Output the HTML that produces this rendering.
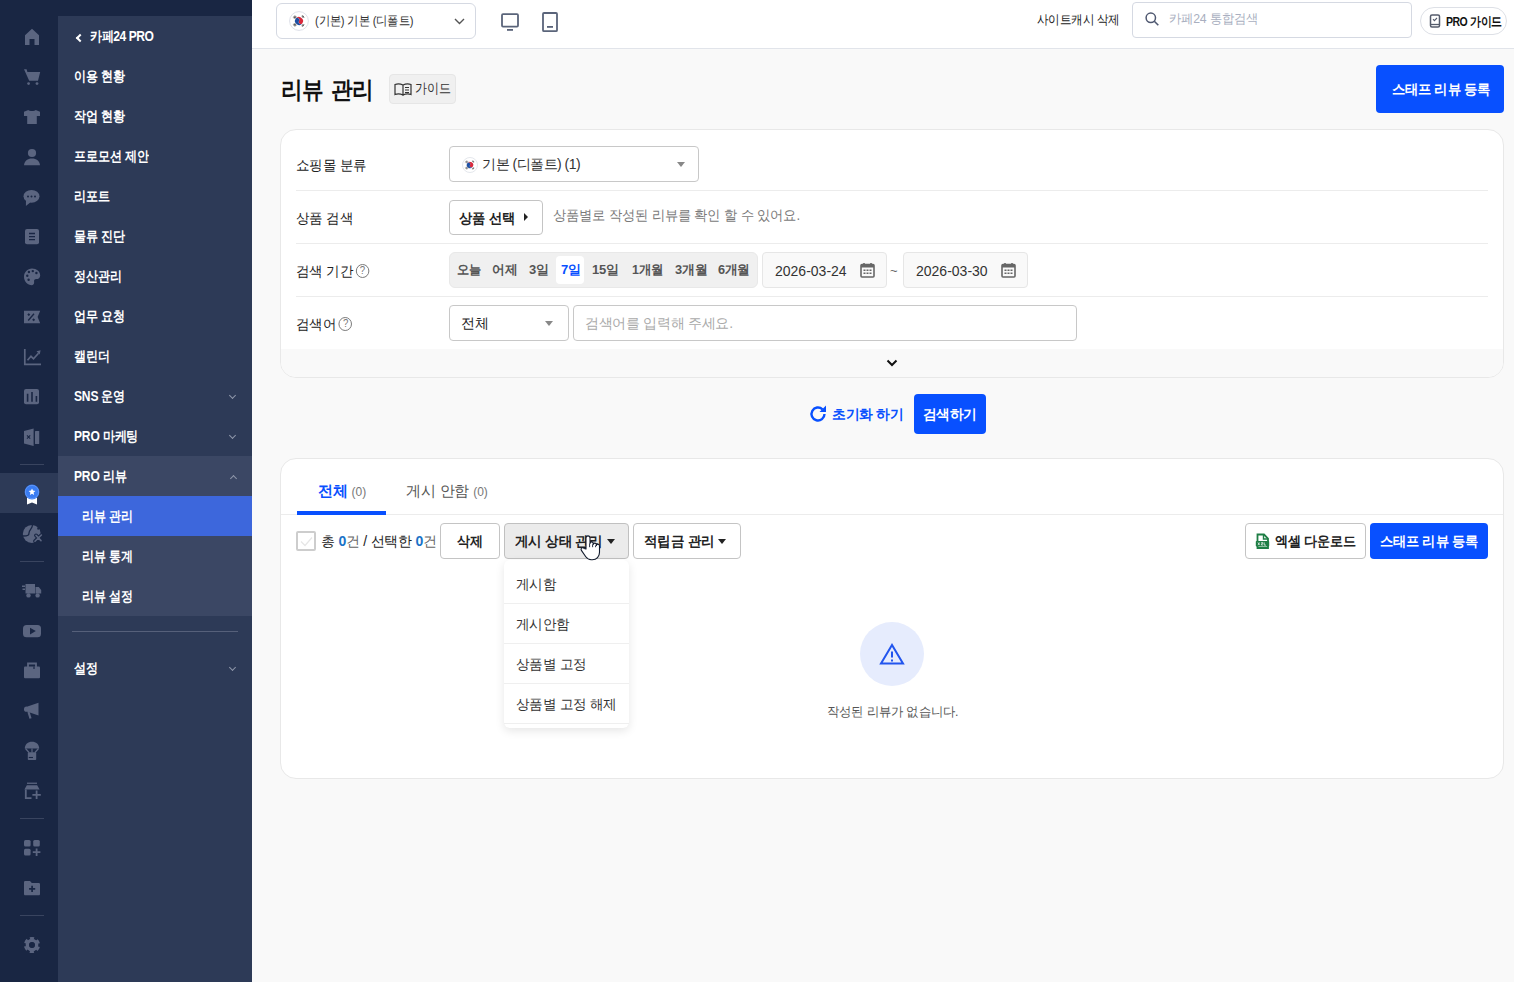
<!DOCTYPE html>
<html lang="ko">
<head>
<meta charset="utf-8">
<style>
*{box-sizing:border-box;margin:0;padding:0}
html,body{width:1514px;height:982px;overflow:hidden}
body{font-family:"Liberation Sans",sans-serif;background:#f9f9f9;position:relative;color:#222}
.abs{position:absolute}
#rail{left:0;top:0;width:58px;height:982px;background:#192643}
#topdark{left:58px;top:0;width:194px;height:16px;background:#192643}
#menu{left:58px;top:16px;width:194px;height:966px;background:#2d3a57}
.mi{position:absolute;left:16px;font-size:14px;font-weight:700;color:#fff;line-height:20px;letter-spacing:-0.2px;word-spacing:0px;white-space:nowrap;transform:scaleX(0.86);transform-origin:0 50%}
.chev{position:absolute;left:172px;width:5px;height:5px;border-right:1.8px solid #8f97aa;border-bottom:1.8px solid #8f97aa;transform:rotate(45deg)}
.rsep{position:absolute;left:20px;width:24px;height:1px;background:#3a4560}
.ri{position:absolute;left:16px;width:26px;height:26px}
#header{left:252px;top:0;width:1262px;height:49px;background:#fff;border-bottom:1px solid #e1e4ea}
.t{position:absolute;white-space:nowrap;line-height:20px}
.card{position:absolute;left:280px;width:1224px;background:#fff;border:1px solid #e8e8e8;border-radius:16px;overflow:hidden}
.lbl{position:absolute;left:15px;font-size:14px;color:#222;line-height:20px;letter-spacing:-0.2px;transform:scaleX(0.965);transform-origin:0 50%;white-space:nowrap}
.hsep{position:absolute;left:15px;width:1192px;height:1px;background:#ececec}
.box{position:absolute;border:1px solid #c8c8c8;border-radius:4px;background:#fff}
.caret{position:absolute;width:0;height:0;border-left:4.5px solid transparent;border-right:4.5px solid transparent;border-top:5px solid #888}
.btn{position:absolute;border:1px solid #c4c4c4;border-radius:4px;background:#fff;font-size:14px;font-weight:700;color:#222;line-height:20px;white-space:nowrap}
.blue{background:#0850ff;color:#fff;border-radius:4px;position:absolute;font-weight:700;white-space:nowrap}
.q{position:relative;top:-1px;display:inline-block;width:14px;height:14px;border:1.2px solid #777;border-radius:50%;font-size:10px;line-height:12px;text-align:center;color:#777;vertical-align:middle;margin-left:3px;font-weight:400;letter-spacing:0}
</style>
</head>
<body>
<!-- ============ SIDEBAR ============ -->
<div id="rail" class="abs"></div>
<div id="topdark" class="abs"></div>
<!-- rail icons -->
<div class="abs" style="left:0;top:473px;width:58px;height:40px;background:#2d3a57"></div>
<svg class="abs" style="left:0;top:0" width="58" height="982" viewBox="0 0 58 982">
<g fill="#5b6580">
 <!-- home -->
 <path d="M32 28.8L39 35.3V45H34.5V39H29.5V45H25V35.3Z"/>
 <!-- cart -->
 <path d="M24 69.2H26.6L27.4 72H40.2L38 80.7H29.2Z"/>
 <circle cx="28.6" cy="83.6" r="1.4"/><circle cx="37" cy="83.6" r="1.4"/>
 <!-- shirt -->
 <path d="M28.3 110L24 111.8V116H27.2V124H36.8V116H40V111.8L35.7 110C34.6 111.4 29.4 111.4 28.3 110Z"/>
 <!-- person -->
 <circle cx="32" cy="153" r="4.1"/>
 <path d="M24 165.2C24.3 160.8 27.6 158.4 32 158.4S39.7 160.8 40 165.2Z"/>
 <!-- chat -->
 <ellipse cx="31.5" cy="196.3" rx="8" ry="6.4"/>
 <path d="M26 200L25.9 206L30.5 202.2Z"/>
 <!-- doc -->
 <rect x="25" y="229" width="14" height="15.2" rx="2"/>
 <!-- palette -->
 <path d="M32 268.5C36.6 268.5 40.2 271.6 40.2 275.4C40.2 277.9 38.4 279 36.3 279C34.6 279 33.8 280 34.1 281.6C34.4 283.6 33.6 285.2 32 285.2C27.5 285.2 24 281.4 24 276.8C24 272.2 27.5 268.5 32 268.5Z"/>
 <!-- coupon -->
 <path d="M24 310.8H40.2L37.6 317L40.2 323.2H24Z"/>
 <!-- bars -->
 <rect x="24" y="389" width="15" height="15.2" rx="2"/>
 <!-- excel-ish -->
 <path d="M24 431L33.6 428.6V446L24 443.6Z"/>
 <rect x="35" y="431" width="4.2" height="13" rx="0.5"/>
 <!-- globe x -->
 <circle cx="31.8" cy="533.9" r="9"/>
 <!-- truck -->
 <path d="M25.5 584H35V593.5H25.5Z"/><path d="M35.5 587H38.8L41.2 590V593.5H35.5Z"/>
 <rect x="22" y="585.5" width="3" height="1.5"/><rect x="22.5" y="588.5" width="2.5" height="1.5"/>
 <circle cx="28.5" cy="595.4" r="2.2"/><circle cx="37.6" cy="595.4" r="2.2"/>
 <!-- youtube -->
 <rect x="23" y="625" width="18" height="12.2" rx="3.5"/>
 <!-- toolbox -->
 <path d="M28 667V663.5H36V667" fill="none" stroke="#5b6580" stroke-width="1.8"/>
 <rect x="24" y="666.5" width="16" height="11.7" rx="1"/>
 <!-- megaphone -->
 <path d="M27.5 706.5L38.5 702.8V715.6L27.5 711.8Z"/>
 <circle cx="26.6" cy="709.2" r="2.6"/>
 <path d="M28.5 712L30.5 718.5" stroke="#5b6580" stroke-width="2.2"/>
 <!-- parachute -->
 <path d="M24.8 748.5C24.8 744.5 28 741.8 32 741.8S39.2 744.5 39.2 748.5Z"/>
 <path d="M25.5 748.5L29 752.5M32 748.5V752.5M38.5 748.5L35 752.5" stroke="#5b6580" stroke-width="1.2"/>
 <rect x="27.8" y="752.3" width="8.4" height="7.8" rx="0.8"/>
 <!-- store+ -->
 <rect x="27" y="782.6" width="10" height="1.3"/>
 <path d="M26.8 785.2H37.2L39.6 789.5H24.4Z"/>
 <path d="M25.8 789.5V798.2H31.5" fill="none" stroke="#5b6580" stroke-width="1.8"/>
 <path d="M36.6 790.5V799M32.4 794.8H40.8" stroke="#5b6580" stroke-width="1.8"/>
 <!-- apps+ -->
 <rect x="24" y="840" width="6.6" height="6.6" rx="1.5"/><rect x="33.2" y="840" width="6.6" height="6.6" rx="1.5"/><rect x="24" y="848.8" width="6.6" height="6.6" rx="1.5"/>
 <path d="M36.6 848.4V856M32.8 852.2H40.4" stroke="#5b6580" stroke-width="1.8"/>
 <!-- folder+ -->
 <path d="M24 882.3C24 881.6 24.5 881 25.2 881H30L31.8 883H38.8C39.5 883 40 883.6 40 884.3V894C40 894.7 39.5 895.3 38.8 895.3H25.2C24.5 895.3 24 894.7 24 894Z"/>
 <!-- gear -->
 <circle cx="32" cy="945" r="6.3"/>
</g>
<g fill="#192643" stroke="none">
 <!-- palette dots -->
 <circle cx="27.3" cy="275.8" r="1.2"/><circle cx="28.9" cy="272" r="1.2"/><circle cx="32.8" cy="271.1" r="1.2"/><circle cx="36.4" cy="273" r="1.2"/><circle cx="28.6" cy="279.8" r="1.2"/>
 <!-- chat dots -->
 <circle cx="28" cy="196.5" r="1"/><circle cx="31.5" cy="196.5" r="1"/><circle cx="35" cy="196.5" r="1"/>
 <!-- youtube play -->
 <path d="M30 627.8L35.8 631.1L30 634.4Z"/>
 <!-- gear hole -->
 <circle cx="32" cy="945" r="2.9"/>
</g>
<g stroke="#192643" fill="none">
 <path d="M29 233.5H35M29 236.6H35M29 239.7H35" stroke-width="1.3"/>
 <path d="M28.2 320.5L34 313.8" stroke-width="1.3"/><circle cx="28.8" cy="314.6" r="0.8" fill="#192643"/><circle cx="33.6" cy="319.8" r="0.8" fill="#192643"/>
 <path d="M27.6 393.8V401.8M32 392V401.8M36.4 396V401.8" stroke-width="1.6"/>
 <path d="M27 435.3L30.2 438.7M30.2 435.3L27 438.7" stroke-width="1.1"/>
 <path d="M32.1 885.8V891.9M29.1 888.8H35.2" stroke-width="1.7"/>
 <path d="M26 596.5h0" />
 <path d="M34 666.5V669" stroke-width="1.2"/>
 <path d="M28.8 757.5H33" stroke-width="1.1"/>
 <path d="M32.4 524.8C32.8 528.5 29 530 29 533C29 535 28.5 536 23 536" stroke-width="1.3"/><ellipse cx="38.2" cy="528.4" rx="1" ry="1.4" fill="#192643" stroke="none"/>
</g>
<g fill="none" stroke="#5b6580" stroke-width="1.7">
 <path d="M24.8 349V364.3H41"/>
 <path d="M27.5 360.2L31 356.3L33.5 358.8L38.5 353.3"/>
</g>
<path d="M36.5 351.3L40.6 350.2L39.7 354.4Z" fill="#5b6580"/>
<!-- globe x overlay -->
<path d="M35 541.2L41.4 535M36 535.4L41 540.6" stroke="#192643" stroke-width="3.8" stroke-linecap="round"/><path d="M35 541.2L41.4 535M36 535.4L41 540.6" stroke="#5b6580" stroke-width="1.6" stroke-linecap="round"/>
<!-- award -->
<path d="M27 496H37V504.6L32 502.4L27 504.6Z" fill="#fff"/>
<circle cx="32" cy="492" r="7.4" fill="#3a7cf2"/>
<circle cx="32" cy="492" r="6.6" fill="none" stroke="#5d94f5" stroke-width="1"/>
<path d="M32 488.4L33 490.6L35.4 490.9L33.6 492.5L34.1 494.9L32 493.7L29.9 494.9L30.4 492.5L28.6 490.9L31 490.6Z" fill="#fff"/>

<circle cx="32" cy="945" r="6.9" fill="none" stroke="#5b6580" stroke-width="2.4" stroke-dasharray="4.1 3.13" transform="rotate(-107 32 945)"/>
<circle cx="32" cy="945" r="2.8" fill="#192643"/>
<!-- separators -->
<g fill="#39445f">
 <rect x="20" y="464" width="24" height="1"/><rect x="20" y="561" width="24" height="1"/><rect x="20" y="818" width="24" height="1"/><rect x="20" y="915" width="24" height="1"/>
</g>
</svg>

<div id="menu" class="abs">
  <div class="abs" style="left:19px;top:18.5px;width:6px;height:6px;border-left:2.2px solid #fff;border-bottom:2.2px solid #fff;transform:rotate(45deg)"></div>
  <div class="mi" style="top:10px;left:32px;letter-spacing:-0.5px">카페24 PRO</div>
  <div class="mi" style="top:50px">이용 현황</div>
  <div class="mi" style="top:90px">작업 현황</div>
  <div class="mi" style="top:130px">프로모션 제안</div>
  <div class="mi" style="top:170px">리포트</div>
  <div class="mi" style="top:210px">물류 진단</div>
  <div class="mi" style="top:250px">정산관리</div>
  <div class="mi" style="top:290px">업무 요청</div>
  <div class="mi" style="top:330px">캘린더</div>
  <div class="mi" style="top:370px">SNS 운영</div>
  <div class="chev" style="top:377px"></div>
  <div class="mi" style="top:410px">PRO 마케팅</div>
  <div class="chev" style="top:417px"></div>
  <div class="abs" style="left:0;top:440px;width:194px;height:160px;background:#3b4764"></div>
  <div class="mi" style="top:450px">PRO 리뷰</div>
  <div class="chev" style="top:460px;left:173px;transform:rotate(-135deg)"></div>
  <div class="abs" style="left:0;top:480px;width:194px;height:40px;background:#3d67dc"></div>
  <div class="mi" style="top:490px;left:24px">리뷰 관리</div>
  <div class="mi" style="top:530px;left:24px">리뷰 통계</div>
  <div class="mi" style="top:570px;left:24px">리뷰 설정</div>
  <div class="abs" style="left:14px;top:615px;width:166px;height:1px;background:#56607a"></div>
  <div class="mi" style="top:642px">설정</div>
  <div class="chev" style="top:649px"></div>
</div>

<!-- ============ HEADER ============ -->
<div id="header" class="abs"></div>

<!-- header content -->
<div class="box" style="left:276px;top:3px;width:200px;height:36px;border-color:#d5d9e2;border-radius:6px"></div>
<svg class="abs" style="left:289px;top:11px" width="20" height="20" viewBox="0 0 20 20"><circle cx="10" cy="10" r="9.4" fill="#fff" stroke="#d9dde5" stroke-width="0.9"/><g transform="rotate(33 10 10)"><path d="M6 10a4 4 0 0 1 8 0a2 2 0 0 1-4 0a2 2 0 0 0-4 0z" fill="#d8283b"/><path d="M6 10a4 4 0 0 0 8 0a2 2 0 0 1-4 0a2 2 0 0 0-4 0z" fill="#1d4fa3"/></g><g stroke="#333" stroke-width="0.8"><path d="M4.3 6.6l1.6-2.1M5 7.2l1.6-2.1M5.7 7.8l1.6-2.1M12.8 4.9l1.6 2.1M13.5 4.3l1.6 2.1M14.2 3.7l0 0M12.8 15.1l1.6-2.1M13.5 15.7l1.6-2.1M4.3 13.4l1.6 2.1M5 12.8l1.6 2.1M5.7 12.2l1.6 2.1"/></g></svg>
<div class="t" style="left:315px;top:11px;font-size:13px;color:#333"><span style="display:inline-block;letter-spacing:-0.2px;transform:scaleX(0.87);transform-origin:0 50%">(기본) 기본 (디폴트)</span></div>
<svg class="abs" style="left:454px;top:18px" width="11" height="7" viewBox="0 0 11 7"><path d="M1 1l4.5 4.5L10 1" fill="none" stroke="#555" stroke-width="1.4"/></svg>
<svg class="abs" style="left:500px;top:12px" width="20" height="20" viewBox="0 0 20 20"><rect x="2" y="2.2" width="16" height="12.4" rx="1" fill="none" stroke="#5a647a" stroke-width="1.8"/><rect x="7" y="17" width="6" height="1.8" fill="#5a647a"/></svg>
<svg class="abs" style="left:541px;top:11px" width="18" height="22" viewBox="0 0 18 22"><rect x="2" y="2" width="14" height="18.2" rx="1" fill="none" stroke="#5a647a" stroke-width="1.8"/><rect x="6" y="15" width="6" height="1.8" fill="#5a647a"/></svg>
<div class="t" style="left:1037px;top:10px;font-size:13px;color:#222"><span style="display:inline-block;letter-spacing:-0.2px;transform:scaleX(0.89);transform-origin:0 50%">사이트캐시 삭제</span></div>
<div class="box" style="left:1132px;top:2px;width:280px;height:36px;border-color:#d5d9e2;border-radius:4px"></div>
<svg class="abs" style="left:1144px;top:11px" width="16" height="16" viewBox="0 0 16 16"><circle cx="6.8" cy="6.8" r="4.7" fill="none" stroke="#4f5870" stroke-width="1.5"/><path d="M10.3 10.3l4 4" stroke="#4f5870" stroke-width="1.6"/></svg>
<div class="t" style="left:1169px;top:9px;font-size:13px;color:#a9afc0"><span style="display:inline-block;letter-spacing:-0.2px;transform:scaleX(0.945);transform-origin:0 50%">카페24 통합검색</span></div>
<div class="abs" style="left:1420px;top:7px;width:87px;height:28px;border:1px solid #dde0e6;border-radius:14px;background:#fff"></div>
<svg class="abs" style="left:1429px;top:14px" width="12" height="14" viewBox="0 0 12 14"><rect x="1.5" y="1" width="9" height="12" rx="1.5" fill="none" stroke="#555c6c" stroke-width="1.5"/><path d="M1.5 10.5h9" stroke="#555c6c" stroke-width="1.3"/><path d="M4 5.2l1.4 1.4L8 4" fill="none" stroke="#555c6c" stroke-width="1.1"/></svg>
<div class="t" style="left:1446px;top:11.5px;font-size:12.5px;font-weight:700;color:#111;letter-spacing:-0.6px;word-spacing:1px;transform:scaleX(0.84);transform-origin:0 50%">PRO 가이드</div>

<!-- page title -->
<div class="t" style="left:281px;top:75px;font-size:24px;font-weight:700;color:#111;line-height:30px;letter-spacing:-0.4px;word-spacing:2px;transform:scaleX(0.9);transform-origin:0 50%">리뷰 관리</div>
<div class="abs" style="left:389px;top:74px;width:67px;height:30px;background:#f0f0f0;border:1px solid #e6e6e6;border-radius:4px"></div>
<svg class="abs" style="left:394px;top:82px" width="18" height="14" viewBox="0 0 18 14"><path d="M1 2.5c2.5-1 5-1 8 .5v10c-3-1.5-5.5-1.5-8-.5z M17 2.5c-2.5-1-5-1-8 .5v10c3-1.5 5.5-1.5 8-.5z" fill="none" stroke="#333" stroke-width="1.2"/><path d="M11 5.5h4M11 8h4M11 10.5h4" stroke="#333" stroke-width="1"/></svg>
<div class="t" style="left:415px;top:79px;font-size:13.5px;color:#333;letter-spacing:-0.3px;transform:scaleX(0.86);transform-origin:0 50%">가이드</div>
<div class="blue" style="left:1376px;top:65px;width:128px;height:48px;font-size:14px;line-height:48px;text-align:center;padding-left:2px"><span style="display:inline-block;letter-spacing:-0.2px;transform:scaleX(0.95);transform-origin:50% 50%">스태프 리뷰 등록</span></div>

<!-- ============ CARD 1 ============ -->
<div class="card" style="top:129px;height:249px">
  <div class="lbl" style="top:25px">쇼핑몰 분류</div>
  <div class="hsep" style="top:60px"></div>
  <div class="lbl" style="top:78px">상품 검색</div>
  <div class="hsep" style="top:113px"></div>
  <div class="lbl" style="top:131px">검색 기간<span class="q">?</span></div>
  <div class="hsep" style="top:166px"></div>
  <div class="lbl" style="top:184px">검색어<span class="q">?</span></div>
  <div class="abs" style="left:0;top:219px;width:1224px;height:30px;background:#f9f9f9"></div>
  <svg class="abs" style="left:605px;top:229px" width="12" height="8" viewBox="0 0 12 8"><path d="M1.5 1.5l4.5 4.5 4.5-4.5" fill="none" stroke="#111" stroke-width="2"/></svg>
</div>
<!-- row 1 -->
<div class="box" style="left:449px;top:146px;width:250px;height:36px;border-color:#c8c8c8"></div>
<svg class="abs" style="left:462px;top:157px" width="16" height="16" viewBox="0 0 20 20"><circle cx="10" cy="10" r="9.4" fill="#fff" stroke="#d9dde5" stroke-width="0.9"/><g transform="rotate(33 10 10)"><path d="M6 10a4 4 0 0 1 8 0a2 2 0 0 1-4 0a2 2 0 0 0-4 0z" fill="#d8283b"/><path d="M6 10a4 4 0 0 0 8 0a2 2 0 0 1-4 0a2 2 0 0 0-4 0z" fill="#1d4fa3"/></g><g stroke="#333" stroke-width="0.8"><path d="M4.3 6.6l1.6-2.1M5 7.2l1.6-2.1M5.7 7.8l1.6-2.1M12.8 4.9l1.6 2.1M13.5 4.3l1.6 2.1M14.2 3.7l0 0M12.8 15.1l1.6-2.1M13.5 15.7l1.6-2.1M4.3 13.4l1.6 2.1M5 12.8l1.6 2.1M5.7 12.2l1.6 2.1"/></g></svg>
<div class="t" style="left:482px;top:154px;font-size:14px;color:#333;letter-spacing:-0.5px">기본 (디폴트) (1)</div>
<div class="caret" style="left:677px;top:162px"></div>
<!-- row 2 -->
<div class="btn" style="left:449px;top:200px;width:94px;height:35px;padding:7px 0 0 9px"><span style="display:inline-block;letter-spacing:-0.2px;transform:scaleX(0.95);transform-origin:0 50%">상품 선택</span></div>
<svg class="abs" style="left:523px;top:212px" width="6" height="10" viewBox="0 0 6 10"><path d="M1 1l4 4-4 4z" fill="#222"/></svg>
<div class="t" style="left:553px;top:205px;font-size:14px;color:#7a7a7a"><span style="display:inline-block;letter-spacing:-0.2px;transform:scaleX(0.948);transform-origin:0 50%">상품별로 작성된 리뷰를 확인 할 수 있어요.</span></div>
<!-- row 3 -->
<div class="abs" style="left:449px;top:252px;width:309px;height:36px;background:#f0f0f0;border:1px solid #e8e8e8;border-radius:6px"></div>
<div class="abs" style="left:556px;top:256px;width:28px;height:28px;background:#fff;border-radius:4px"></div>
<div class="t" style="left:457px;top:260px;font-size:13px;font-weight:700;color:#555"><span style="display:inline-block;letter-spacing:-0.2px;transform:scaleX(0.94);transform-origin:0 50%">오늘</span></div>
<div class="t" style="left:492px;top:260px;font-size:13px;font-weight:700;color:#555"><span style="display:inline-block;letter-spacing:-0.2px;transform:scaleX(0.98);transform-origin:0 50%">어제</span></div>
<div class="t" style="left:529px;top:260px;font-size:13px;font-weight:700;color:#555"><span style="display:inline-block;letter-spacing:-0.2px;transform:scaleX(1.0);transform-origin:0 50%">3일</span></div>
<div class="t" style="left:561px;top:260px;font-size:13px;font-weight:700;color:#0850ff"><span style="display:inline-block;letter-spacing:-0.2px;transform:scaleX(1.0);transform-origin:0 50%">7일</span></div>
<div class="t" style="left:592px;top:260px;font-size:13px;font-weight:700;color:#555"><span style="display:inline-block;letter-spacing:-0.2px;transform:scaleX(1.0);transform-origin:0 50%">15일</span></div>
<div class="t" style="left:632px;top:260px;font-size:13px;font-weight:700;color:#555"><span style="display:inline-block;letter-spacing:-0.2px;transform:scaleX(0.96);transform-origin:0 50%">1개월</span></div>
<div class="t" style="left:675px;top:260px;font-size:13px;font-weight:700;color:#555"><span style="display:inline-block;letter-spacing:-0.2px;transform:scaleX(0.99);transform-origin:0 50%">3개월</span></div>
<div class="t" style="left:718px;top:260px;font-size:13px;font-weight:700;color:#555"><span style="display:inline-block;letter-spacing:-0.2px;transform:scaleX(0.98);transform-origin:0 50%">6개월</span></div>
<div class="abs" style="left:762px;top:252px;width:125px;height:36px;background:#f9f9f9;border:1px solid #e6e6e6;border-radius:4px"></div>
<div class="t" style="left:775px;top:261px;font-size:14px;color:#333">2026-03-24</div>
<div class="t" style="left:890px;top:261px;font-size:13px;color:#666">~</div>
<div class="abs" style="left:903px;top:252px;width:125px;height:36px;background:#f9f9f9;border:1px solid #e6e6e6;border-radius:4px"></div>
<div class="t" style="left:916px;top:261px;font-size:14px;color:#333">2026-03-30</div>
<svg class="abs" style="left:860px;top:262px" width="15" height="16" viewBox="0 0 15 16"><rect x="1" y="2.5" width="13" height="12.5" rx="1" fill="none" stroke="#666" stroke-width="1.6"/><rect x="1" y="2.5" width="13" height="3" fill="#666"/><path d="M4 1v3M11 1v3" stroke="#666" stroke-width="1.6"/><g fill="#666"><rect x="3.5" y="7.5" width="2" height="1.5"/><rect x="6.5" y="7.5" width="2" height="1.5"/><rect x="9.5" y="7.5" width="2" height="1.5"/><rect x="3.5" y="10.5" width="2" height="1.5"/><rect x="6.5" y="10.5" width="2" height="1.5"/><rect x="9.5" y="10.5" width="2" height="1.5"/></g></svg>
<svg class="abs" style="left:1001px;top:262px" width="15" height="16" viewBox="0 0 15 16"><rect x="1" y="2.5" width="13" height="12.5" rx="1" fill="none" stroke="#666" stroke-width="1.6"/><rect x="1" y="2.5" width="13" height="3" fill="#666"/><path d="M4 1v3M11 1v3" stroke="#666" stroke-width="1.6"/><g fill="#666"><rect x="3.5" y="7.5" width="2" height="1.5"/><rect x="6.5" y="7.5" width="2" height="1.5"/><rect x="9.5" y="7.5" width="2" height="1.5"/><rect x="3.5" y="10.5" width="2" height="1.5"/><rect x="6.5" y="10.5" width="2" height="1.5"/><rect x="9.5" y="10.5" width="2" height="1.5"/></g></svg>
<!-- row 4 -->
<div class="box" style="left:449px;top:305px;width:120px;height:36px"></div>
<div class="t" style="left:461px;top:313px;font-size:14px;color:#222">전체</div>
<div class="caret" style="left:545px;top:321px"></div>
<div class="box" style="left:573px;top:305px;width:504px;height:36px"></div>
<div class="t" style="left:585px;top:313px;font-size:14px;color:#aaa;letter-spacing:-0.3px">검색어를 입력해 주세요.</div>

<!-- actions -->
<svg class="abs" style="left:808px;top:404px" width="20" height="20" viewBox="0 0 20 20"><path d="M16.5 10a6.5 6.5 0 1 1-2-4.7" fill="none" stroke="#0850ff" stroke-width="2.4"/><path d="M18 1.5v6.5h-6.5z" fill="#0850ff"/></svg>
<div class="t" style="left:832px;top:404px;font-size:14px;font-weight:700;color:#0850ff"><span style="display:inline-block;letter-spacing:-0.2px;transform:scaleX(0.985);transform-origin:0 50%">초기화 하기</span></div>
<div class="blue" style="left:914px;top:394px;width:72px;height:40px;font-size:14px;line-height:40px;text-align:center"><span style="display:inline-block;letter-spacing:-0.2px;transform:scaleX(0.98);transform-origin:50% 50%">검색하기</span></div>

<!-- ============ CARD 2 ============ -->
<div class="card" style="top:458px;height:321px">
  <div class="abs" style="left:0;top:55px;width:1224px;height:1px;background:#ececec"></div>
  <div class="abs" style="left:16px;top:52px;width:89px;height:4px;background:#0850ff"></div>
</div>
<div class="t" style="left:318px;top:481px;font-size:15px;font-weight:700;color:#0850ff;letter-spacing:-0.2px">전체 <span style="font-size:12px;font-weight:400;color:#777;letter-spacing:0">(0)</span></div>
<div class="t" style="left:406px;top:481px;font-size:15px;color:#555;letter-spacing:-0.2px">게시 안함 <span style="font-size:12px;color:#777;letter-spacing:0">(0)</span></div>
<div class="abs" style="left:296px;top:531px;width:20px;height:20px;border:2px solid #cdcdcd;border-radius:2px;background:#fff"></div>
<svg class="abs" style="left:299px;top:535px" width="15" height="13" viewBox="0 0 15 13"><path d="M2 6.5l4 4 7-8" fill="none" stroke="#e6e6e6" stroke-width="1.2"/></svg>
<div class="t" style="left:321px;top:531px;font-size:14px;color:#222;letter-spacing:-0.25px">총 <b style="color:#1a73c8">0</b><span style="color:#666">건</span> / 선택한 <b style="color:#1a73c8">0</b><span style="color:#666">건</span></div>
<div class="btn" style="left:440px;top:523px;width:60px;height:36px;text-align:center;padding-top:7px"><span style="display:inline-block;letter-spacing:-0.2px;transform:scaleX(0.93);transform-origin:50% 50%">삭제</span></div>
<div class="btn" style="left:504px;top:523px;width:125px;height:36px;padding:7px 0 0 10px;background:#ebebeb;border-color:#c0c0c0"><span style="display:inline-block;letter-spacing:-0.2px;transform:scaleX(0.965);transform-origin:0 50%">게시 상태 관리</span></div>
<div class="caret" style="left:607px;top:539px;border-top-color:#222;border-left-width:4px;border-right-width:4px"></div>
<div class="btn" style="left:633px;top:523px;width:108px;height:36px;padding:7px 0 0 10px"><span style="display:inline-block;letter-spacing:-0.2px;transform:scaleX(0.965);transform-origin:0 50%">적립금 관리</span></div>
<div class="caret" style="left:718px;top:539px;border-top-color:#222;border-left-width:4px;border-right-width:4px"></div>

<div class="abs" style="left:1245px;top:523px;width:121px;height:36px;border:1px solid #c4c4c4;border-radius:4px;background:#fff"></div>
<svg class="abs" style="left:1255px;top:533px" width="15" height="16" viewBox="0 0 15 16"><path d="M2.5 1.5h6.5l4 4v9.5h-10.5z" fill="none" stroke="#1e7e45" stroke-width="1.8"/><path d="M8.5 1.5v4.5h4.5" fill="none" stroke="#1e7e45" stroke-width="1.4"/><rect x="0.8" y="8" width="13.4" height="5.6" rx="0.8" fill="#1e7e45"/><path d="M3 9.5l1.6 2.6M4.6 9.5L3 12.1M6.2 9.6h1.6v1.2H6.4v1.2h1.5M9.2 9.4v2.7h1.8" stroke="#fff" stroke-width="0.7" fill="none"/></svg>
<div class="t" style="left:1275px;top:531px;font-size:14px;font-weight:700;color:#222"><span style="display:inline-block;letter-spacing:-0.2px;transform:scaleX(0.936);transform-origin:0 50%">엑셀 다운로드</span></div>
<div class="blue" style="left:1370px;top:523px;width:118px;height:36px;font-size:14px;line-height:36px;text-align:center"><span style="display:inline-block;letter-spacing:-0.2px;transform:scaleX(0.945);transform-origin:50% 50%">스태프 리뷰 등록</span></div>

<!-- empty state -->
<div class="abs" style="left:860px;top:622px;width:64px;height:64px;border-radius:50%;background:#e6ecfd"></div>
<svg class="abs" style="left:878px;top:642px" width="28" height="24" viewBox="0 0 28 24"><path d="M14 3L3 21.5h22z" fill="none" stroke="#2255ee" stroke-width="2"/><path d="M14 9.5v6M14 17.5v2" stroke="#2255ee" stroke-width="2"/></svg>
<div class="t" style="left:827px;top:702px;font-size:13px;color:#555"><span style="display:inline-block;letter-spacing:-0.2px;transform:scaleX(0.95);transform-origin:0 50%">작성된 리뷰가 없습니다.</span></div>

<!-- dropdown -->
<div class="abs" style="left:504px;top:560px;width:125px;height:168px;background:#fff;border-radius:6px;box-shadow:0 3px 10px rgba(0,0,0,0.10)">
  <div class="t" style="left:12px;top:14px;font-size:14px;color:#333;letter-spacing:-0.2px;transform:scaleX(0.97);transform-origin:0 50%">게시함</div>
  <div class="abs" style="left:0;top:43px;width:125px;height:1px;background:#efefef"></div>
  <div class="t" style="left:12px;top:54px;font-size:14px;color:#333;letter-spacing:-0.2px;transform:scaleX(0.97);transform-origin:0 50%">게시안함</div>
  <div class="abs" style="left:0;top:83px;width:125px;height:1px;background:#efefef"></div>
  <div class="t" style="left:12px;top:94px;font-size:14px;color:#333;letter-spacing:-0.2px;transform:scaleX(0.97);transform-origin:0 50%">상품별 고정</div>
  <div class="abs" style="left:0;top:123px;width:125px;height:1px;background:#efefef"></div>
  <div class="t" style="left:12px;top:134px;font-size:14px;color:#333;letter-spacing:-0.2px;transform:scaleX(0.97);transform-origin:0 50%">상품별 고정 해제</div>
  <div class="abs" style="left:0;top:163px;width:125px;height:1px;background:#efefef"></div>
</div>
<!-- cursor -->
<svg class="abs" style="left:570px;top:525px" width="40" height="40" viewBox="0 0 40 40"><path d="M16 24V13C16 11.8 16.9 10.9 18 10.9S20 11.8 20 13V18.4C20 17.5 20.7 16.9 21.6 16.9S23.2 17.5 23.2 18.4V19.4C23.2 18.6 23.9 18.1 24.8 18.1S26.4 18.7 26.4 19.6V20.5C26.4 19.8 27.1 19.3 27.9 19.3C28.8 19.3 29.5 20 29.5 20.9V27.2C29.5 31.6 26.6 34.7 22.4 34.7H21.2C18.8 34.7 17.1 33.7 15.8 31.8L11.4 25.4C10.8 24.5 11 23.5 11.8 22.9C12.6 22.4 13.6 22.6 14.2 23.4Z" fill="#fff" stroke="#111a2c" stroke-width="1.1" stroke-linejoin="round"/><path d="M19.6 18.6V22.2M22.6 19.4V22.2M25.6 20.4V22.2" stroke="#111a2c" stroke-width="0.9"/></svg>

</body>
</html>
